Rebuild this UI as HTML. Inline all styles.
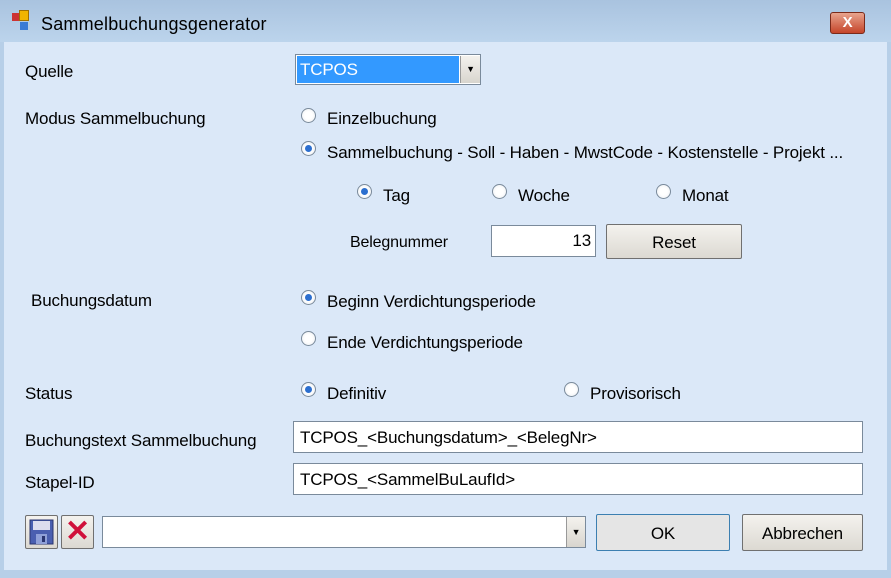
<!DOCTYPE html>
<html><head><style>
*{margin:0;padding:0;box-sizing:border-box}
body{width:891px;height:578px;background:#b7cfe8;font-family:"Liberation Sans",sans-serif;font-size:17px;color:#000;position:relative;overflow:hidden;letter-spacing:-0.15px}
.a{position:absolute;white-space:nowrap}
#title{background:linear-gradient(#a9c3df,#bcd4ec);position:absolute;left:0;top:0;width:891px;height:42px}
#panel{position:absolute;left:4px;top:42px;width:883px;height:528px;background:#dbe8f8}
.r{position:absolute;width:15px;height:15px;border-radius:50%;border:1px solid #7a8a9b;background:radial-gradient(circle,#fff 40%,#e8ecf0 100%)}
.r.on::after{content:"";position:absolute;left:3px;top:3px;width:7px;height:7px;border-radius:50%;background:#2c6fcf}
.tb{position:absolute;background:#fff;border:1px solid #7a8a9b;padding-left:6px;line-height:31px}
.btn{position:absolute;border:1px solid #707070;border-radius:2px;background:linear-gradient(#f4f2ee,#dcd9d2);text-align:center}
</style></head><body>
<div id="title"></div>
<div class="a" style="left:12px;top:13px;width:8px;height:8px;background:#c33"></div>
<div class="a" style="left:19px;top:10px;width:10px;height:11px;background:#f0b400;border:1px solid #a07000"></div>
<div class="a" style="left:20px;top:22px;width:8px;height:8px;background:#3a7bd5"></div>
<div class="a" style="left:41px;top:14px;font-size:18px;letter-spacing:0.2px">Sammelbuchungsgenerator</div>
<div class="a" style="left:830px;top:12px;width:35px;height:22px;border:1px solid #7a2a1a;border-radius:3px;background:linear-gradient(#e8a48e,#c5452a);color:#fff;font-weight:bold;text-align:center;line-height:20px;font-size:15px">X</div>
<div id="panel"></div>
<div class="a" style="left:25px;top:62px">Quelle</div>
<div class="a" style="left:295px;top:54px;width:186px;height:31px;border:1px solid #7a8a9b;background:#fff"></div>
<div class="a" style="left:297px;top:56px;width:162px;height:27px;background:#3399ff;color:#fff;line-height:28px;padding-left:3px">TCPOS</div>
<div class="a" style="left:460px;top:56px;width:20px;height:27px;background:linear-gradient(#f4f2ee,#d8d5ce);border-left:1px solid #999;font-size:9px;text-align:center;line-height:27px">▼</div>

<div class="a" style="left:25px;top:109px">Modus Sammelbuchung</div>
<div class="r" style="left:301px;top:108px"></div><div class="a" style="left:327px;top:109px">Einzelbuchung</div>
<div class="r on" style="left:301px;top:141px"></div><div class="a" style="left:327px;top:143px">Sammelbuchung - Soll - Haben - MwstCode - Kostenstelle - Projekt ...</div>
<div class="r on" style="left:357px;top:184px"></div><div class="a" style="left:383px;top:186px">Tag</div>
<div class="r" style="left:492px;top:184px"></div><div class="a" style="left:518px;top:186px">Woche</div>
<div class="r" style="left:656px;top:184px"></div><div class="a" style="left:682px;top:186px">Monat</div>
<div class="a" style="left:350px;top:234px;font-size:16px">Belegnummer</div>
<div class="tb" style="left:491px;top:225px;width:105px;height:32px;text-align:right;padding-right:4px;line-height:30px">13</div>
<div class="btn" style="left:606px;top:224px;width:136px;height:35px;line-height:35px">Reset</div>

<div class="a" style="left:31px;top:291px">Buchungsdatum</div>
<div class="r on" style="left:301px;top:290px"></div><div class="a" style="left:327px;top:292px">Beginn Verdichtungsperiode</div>
<div class="r" style="left:301px;top:331px"></div><div class="a" style="left:327px;top:333px">Ende Verdichtungsperiode</div>

<div class="a" style="left:25px;top:384px">Status</div>
<div class="r on" style="left:301px;top:382px"></div><div class="a" style="left:327px;top:384px">Definitiv</div>
<div class="r" style="left:564px;top:382px"></div><div class="a" style="left:590px;top:384px">Provisorisch</div>

<div class="a" style="left:25px;top:431px">Buchungstext Sammelbuchung</div>
<div class="tb" style="left:293px;top:421px;width:570px;height:32px">TCPOS_&lt;Buchungsdatum&gt;_&lt;BelegNr&gt;</div>
<div class="a" style="left:25px;top:473px">Stapel-ID</div>
<div class="tb" style="left:293px;top:463px;width:570px;height:32px">TCPOS_&lt;SammelBuLaufId&gt;</div>

<div class="btn" style="left:25px;top:515px;width:33px;height:34px;padding:3px">
<svg width="25" height="26" viewBox="0 0 25 26"><rect x="1" y="1" width="23" height="24" fill="#4a5fb0" stroke="#2a3570"/><rect x="4" y="2" width="17" height="9" fill="#dde"/><rect x="7" y="15" width="11" height="10" fill="#8fa0d8"/><rect x="13" y="17" width="3" height="6" fill="#2a3570"/></svg></div>
<div class="btn" style="left:61px;top:515px;width:33px;height:34px;color:#d0103a;font-size:30px;line-height:32px;font-weight:bold">✕</div>
<div class="a" style="left:102px;top:516px;width:484px;height:32px;border:1px solid #7a8a9b;background:#fff"></div>
<div class="a" style="left:566px;top:517px;width:19px;height:30px;background:linear-gradient(#f4f2ee,#d8d5ce);border-left:1px solid #999;font-size:9px;text-align:center;line-height:30px">▼</div>
<div class="btn" style="left:596px;top:514px;width:134px;height:37px;line-height:37px;border:1px solid #3c7fb1;background:#e5e5e5">OK</div>
<div class="btn" style="left:742px;top:514px;width:121px;height:37px;line-height:37px">Abbrechen</div>
</body></html>
